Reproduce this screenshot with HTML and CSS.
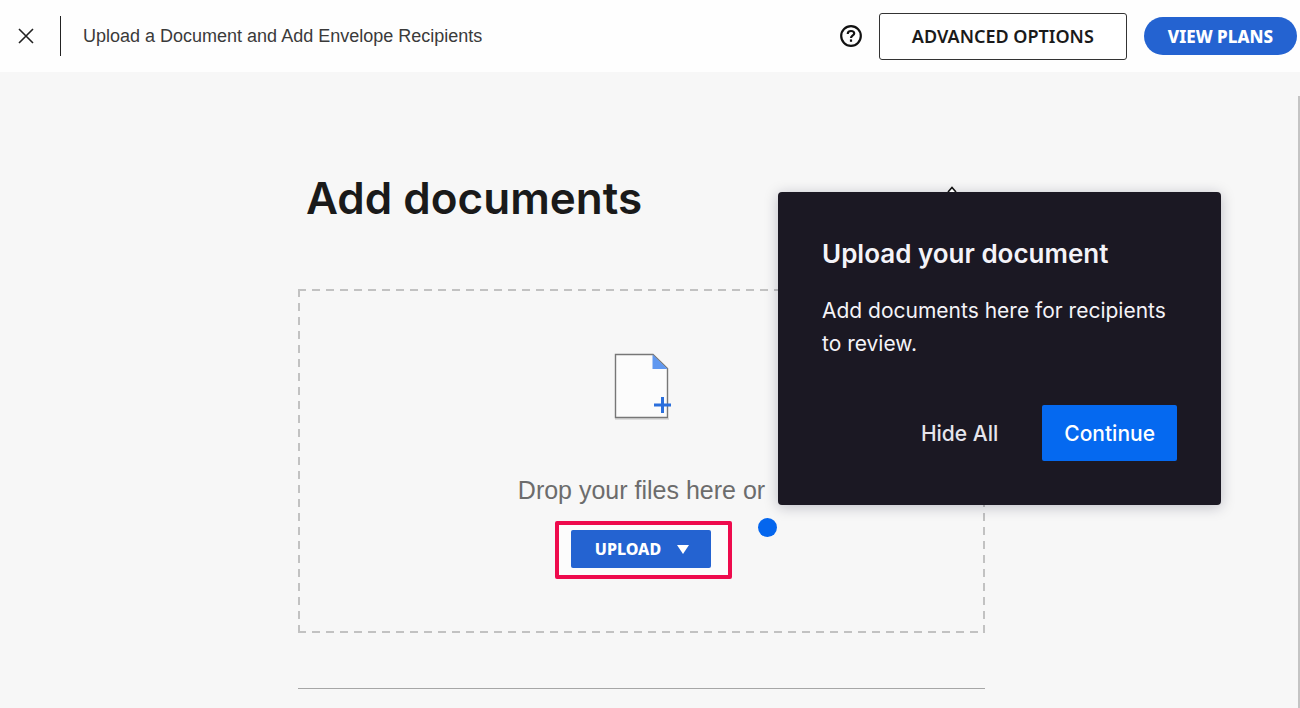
FILE: index.html
```html
<!DOCTYPE html>
<html lang="en">
<head>
<meta charset="utf-8">
<meta name="viewport" content="width=device-width, initial-scale=1">
<title>Upload a Document and Add Envelope Recipients</title>
<link rel="stylesheet" href="styles.css">
</head>
<body>
<header class="topbar">
  <button class="icon-button close" type="button" aria-label="Close">
    <svg width="16" height="16" viewBox="0 0 16 16" fill="none" stroke="#222" stroke-width="1.6"><path d="M1 1l14 14M15 1L1 15"/></svg>
  </button>
  <p class="page-name">Upload a Document and Add Envelope Recipients</p>
  <button class="icon-button help" type="button" aria-label="Help">
    <svg width="24" height="24" viewBox="0 0 24 24" fill="none" stroke="#111" stroke-width="2.2"><circle cx="12" cy="12" r="9.8"/><path d="M8.8 10V9.6C8.8 7.9 10.1 7 12 7s3.200 1 3.200 2.500c0 1.900-3.200 2.100-3.200 4.500"/><path d="M12 15.400v2.400"/></svg>
  </button>
  <button class="advanced" type="button">ADVANCED OPTIONS</button>
  <button class="plans" type="button">VIEW PLANS</button>
</header>
<main class="content">
  <div class="scroll-edge"></div>
  <section class="column">
    <h1 class="heading">Add documents</h1>
    <div class="dropzone">
      <svg class="file-icon" width="60" height="70" viewBox="2 -1 60 70" fill="none">
        <path d="M5 67h54" stroke="#ddd" stroke-width="2"/>
        <path d="M5.500 2.500H43L57.500 16.500V65.500H5.500Z" fill="#fcfcfc" stroke="#777" stroke-width="1.400"/>
        <path d="M42.500 2.500V17H57.500Z" fill="#6098f0"/>
        <path d="M52.500 45v16M44 53h17" stroke="#2b6fdc" stroke-width="3"/>
      </svg>
      <p class="drop-text">Drop your files here or</p>
      <div class="highlight">
        <button class="upload" type="button">UPLOAD
          <svg width="12" height="9" viewBox="0 0 12 9"><path d="M0 0h12L6 9z" fill="#fff"/></svg>
        </button>
      </div>
      <span class="beacon"></span>
      <aside class="tip" role="dialog" aria-labelledby="tip-title">
        <svg class="tip-arrow" width="10" height="6" viewBox="0 0 10 6"><path d="M1 6l4-4.500L9 6" fill="#fff" stroke="#111" stroke-width="1.600"/></svg>
        <h2 class="tip-title" id="tip-title">Upload your document</h2>
        <p class="tip-text">Add documents here for recipients to review.</p>
        <div class="tip-actions">
          <button class="hide" type="button">Hide All</button>
          <button class="continue" type="button">Continue</button>
        </div>
      </aside>
    </div>
    <hr class="rule">
  </section>
</main>
</body>
</html>
```
FILE: styles.css
```css
* { box-sizing: border-box; }
body {
  margin: 0;
  min-height: 100vh;
  display: flex;
  flex-direction: column;
  background: #f7f7f7;
  font-family: "Liberation Sans", Arial, sans-serif;
  color: #1a1a1a;
}
h1, h2, p { margin: 0; }
button { font: inherit; border: 0; padding: 0; cursor: pointer; }
svg { display: block; }

.topbar {
  display: flex;
  align-items: center;
  min-height: 72px;
  padding-right: 3px;
  background: #fefefe;
}
.icon-button { background: none; }
.close { padding: 12px 26px 12px 18px; border-right: 1px solid #222; }
.page-name { flex: 1; padding-left: 22px; font-size: 18px; color: #3a3a3a; }
.help { margin-right: 16px; }
.advanced, .plans, .upload { font-family: "Noto Sans", sans-serif; }
.advanced {
  height: 47px;
  padding: 0 32px;
  border: 1px solid #333;
  border-radius: 3px;
  background: #fff;
  color: #1a1a1a;
  font-size: 18px;
  font-weight: 600;
}
.plans {
  height: 38px;
  margin-left: 17px;
  padding: 0 24px;
  border-radius: 19px;
  background: #2463d1;
  color: #fff;
  font-size: 17px;
  font-weight: 800;
}

.content {
  flex: 1;
  position: relative;
  display: flex;
  justify-content: center;
  padding: 99px 17px 18px 0;
}
.scroll-edge {
  position: absolute;
  top: 24px;
  right: 0;
  bottom: 0;
  width: 2px;
  background: #c4c4c4;
}
.column { width: 687px; }
.heading {
  padding-left: 8px;
  font-family: Inter, sans-serif;
  font-size: 44px;
  line-height: 54px;
  font-weight: 600;
}
.dropzone {
  position: relative;
  display: flex;
  flex-direction: column;
  align-items: center;
  margin-top: 64px;
  padding: 62px 0 54px;
  --across: repeating-linear-gradient(90deg, #c2c2c2 0 8px, transparent 8px 14px);
  --down: repeating-linear-gradient(180deg, #c2c2c2 0 8px, transparent 8px 14px);
  background:
    var(--across) top / 100% 2px no-repeat,
    var(--across) bottom / 100% 2px no-repeat,
    var(--down) left / 2px 100% no-repeat,
    var(--down) right / 2px 100% no-repeat;
}
.drop-text { margin-top: 54px; font-size: 25px; line-height: 30px; color: #6c6c6c; }
.highlight {
  margin: 16px 0 0 4px;
  padding: 5px 17px 7px 12px;
  border: 4px solid #ee0b4d;
  border-radius: 2px;
  background: #fcfcfc;
}
.upload {
  display: flex;
  align-items: center;
  gap: 16px;
  height: 38px;
  padding: 0 22px 0 24px;
  border-radius: 2px;
  background: #2463d1;
  color: #fff;
  font-size: 16px;
  font-weight: 800;
}
.beacon {
  position: absolute;
  left: 460px;
  top: 229px;
  width: 19px;
  height: 19px;
  border-radius: 50%;
  background: #0466ee;
}
.tip {
  position: absolute;
  left: 480px;
  top: -97px;
  width: 443px;
  padding: 44px;
  border-radius: 4px;
  background: #1b1823;
  box-shadow: 0 2px 14px rgba(20, 20, 50, 0.25);
  color: #f4f3f8;
  font-family: Inter, sans-serif;
}
.tip-arrow { position: absolute; left: 169px; top: -6px; }
.tip-title { font-size: 26px; line-height: 36px; font-weight: 600; }
.tip-text { margin-top: 22px; font-size: 21px; line-height: 33px; }
.tip-actions { display: flex; justify-content: flex-end; gap: 44px; margin-top: 45px; }
.hide, .continue { height: 56px; font-size: 21px; font-weight: 500; }
.hide { background: none; color: #e6e5ec; }
.continue {
  padding: 0 22px;
  border-radius: 2px;
  background: #0569f0;
  color: #fff;
}
.rule { margin: 55px 0 0; border: 0; border-top: 1px solid #a6a6a6; }
```
